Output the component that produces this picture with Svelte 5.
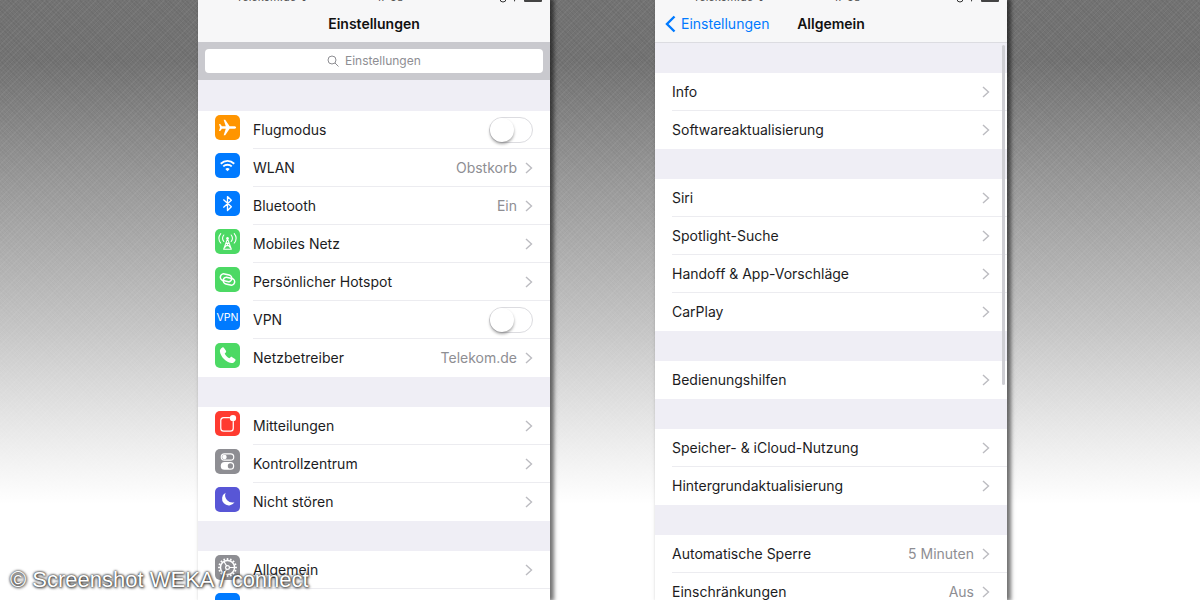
<script>
  const settings = [
    [
      { label: 'Flugmodus', icon: 'plane', color: '#ff9500', toggle: true },
      { label: 'WLAN', icon: 'wifi', color: '#007aff', value: 'Obstkorb' },
      { label: 'Bluetooth', icon: 'bluetooth', color: '#007aff', value: 'Ein' },
      { label: 'Mobiles Netz', icon: 'antenna', color: '#4cd964' },
      { label: 'Persönlicher Hotspot', icon: 'hotspot', color: '#4cd964' },
      { label: 'VPN', icon: 'vpn', color: '#007aff', toggle: true },
      { label: 'Netzbetreiber', icon: 'phone', color: '#4cd964', value: 'Telekom.de' }
    ],
    [
      { label: 'Mitteilungen', icon: 'notify', color: '#ff3b30' },
      { label: 'Kontrollzentrum', icon: 'control', color: '#8e8e93' },
      { label: 'Nicht stören', icon: 'moon', color: '#5856d6' }
    ],
    [
      { label: 'Allgemein', icon: 'gear', color: '#8e8e93' },
      { label: '', icon: 'display', color: '#007aff' }
    ]
  ];

  const general = [
    [{ label: 'Info' }, { label: 'Softwareaktualisierung' }],
    [
      { label: 'Siri' },
      { label: 'Spotlight-Suche' },
      { label: 'Handoff & App-Vorschläge' },
      { label: 'CarPlay' }
    ],
    [{ label: 'Bedienungshilfen' }],
    [{ label: 'Speicher- & iCloud-Nutzung' }, { label: 'Hintergrundaktualisierung' }],
    [
      { label: 'Automatische Sperre', value: '5 Minuten' },
      { label: 'Einschränkungen', value: 'Aus' }
    ]
  ];

  const teeth = Array.from({ length: 16 }, (_, i) => i * 22.5);
</script>

{#snippet statusBar()}
  <div class="status">
    <span>Telekom.de ᯤ</span>
    <span>17:58</span>
    <span class="power">
      <svg width="46" height="12" viewBox="0 0 46 12" aria-hidden="true">
        <circle cx="5" cy="8" r="3" fill="none" stroke="#333" />
        <path d="M16 11l6-9-9 4h3z" fill="#333" />
        <rect x="26" y="2" width="18" height="9" rx="1" fill="#444" />
      </svg>
    </span>
  </div>
{/snippet}

{#snippet glyph(name)}
  <svg viewBox="0 0 26 26" fill="none" stroke="#fff" stroke-linecap="round" stroke-linejoin="round" aria-hidden="true">
    {#if name === 'plane'}
      <path d="M22 13c0-.9-1.200-1.400-2.600-1.400h-4.200L10.600 5H9l2.200 6.600H7.200L5.400 9.400H4.200L5.200 13l-1 3.600h1.200l1.800-2.200h4L9 21h1.600l4.600-6.600h4.200c1.400 0 2.600-.5 2.600-1.400z" fill="#fff" stroke="none" />
    {:else if name === 'wifi'}
      <path d="M6 11.200c4-3.900 10-3.900 14 0M8.600 14c2.500-2.400 6.300-2.400 8.800 0" stroke-width="1.900" stroke-linecap="butt" />
      <path d="M13 19l-2.300-2.400c1.300-1.200 3.300-1.200 4.600 0z" fill="#fff" stroke="none" />
    {:else if name === 'bluetooth'}
      <path d="M9 9.200l8 7.200-4 3.800V5.800l4 3.800-8 7.200" stroke-width="1.400" />
    {:else if name === 'antenna'}
      <path d="M13 10l-4 11M13 10l4 11M11.500 14.500h3M10.500 17.500h5M11.500 14.500l5 5.500M14.500 14.500l-5 5.500M9 21h8" stroke-width="1.100" />
      <circle cx="13" cy="9.500" r="1.300" fill="#fff" stroke="none" />
      <path d="M9.200 6.200c-1.500 1.900-1.500 4.900 0 6.800M16.800 6.200c1.500 1.900 1.500 4.900 0 6.800M6 4.800c-2.500 3-2.500 6.800 0 9.800M20 4.800c2.500 3 2.500 6.800 0 9.800" stroke-width="1.100" />
    {:else if name === 'hotspot'}
      <g stroke-width="1.600">
        <rect x="5.500" y="7.700" width="12" height="7" rx="3.500" transform="rotate(14 11.500 11.200)" />
        <rect x="8.500" y="11.300" width="12" height="7" rx="3.500" transform="rotate(14 14.500 14.800)" />
      </g>
    {:else if name === 'vpn'}
      <text x="13" y="17" text-anchor="middle" class="vpn">VPN</text>
    {:else if name === 'phone'}
      <path d="M7.600 4.800c.7-.5 1.300-.4 1.800.3l2 3c.4.700.3 1.200-.2 1.700l-1.100 1.100c.9 2 2.700 3.900 4.900 5l1.200-1.100c.5-.5 1-.5 1.700-.1l2.900 2c.7.5.8 1.100.3 1.800-1.100 1.800-2.500 2.700-4.300 2.300C11 19.600 5.900 14.300 5.100 8.800c-.2-1.600.9-3 2.500-4z" fill="#fff" stroke="none" />
    {:else if name === 'notify'}
      <path d="M15 7H9a3 3 0 0 0-3 3v8a3 3 0 0 0 3 3h7a3 3 0 0 0 3-3v-7" stroke-width="1.300" />
      <circle cx="18.700" cy="7.400" r="3.300" fill="#fff" stroke="none" />
    {:else if name === 'control'}
      <rect x="6.500" y="5" width="13" height="6.600" rx="3.300" stroke-width="1.200" />
      <circle cx="9.800" cy="8.300" r="2.400" fill="#fff" stroke="none" />
      <rect x="6" y="13.600" width="14" height="8" rx="4" fill="#fff" stroke="none" />
      <circle cx="16" cy="17.600" r="2.700" fill="#8e8e93" stroke="none" />
    {:else if name === 'moon'}
      <path d="M11 6a7 7 0 1 0 9.300 9.800A7.600 7.600 0 0 1 11 6z" fill="#fff" stroke="none" />
    {:else if name === 'gear'}
      {#each teeth as angle}
        <path d="M13 3.200v2" stroke-width="1.700" stroke-linecap="butt" transform="rotate({angle} 13 13)" />
      {/each}
      <circle cx="13" cy="13" r="7.300" stroke-width="1.500" />
      <circle cx="13" cy="13" r="2" stroke-width="1.200" />
      <path d="M15 13h5M12 11.300L9.500 7M12 14.700L9.500 19" stroke-width="1.200" />
    {/if}
  </svg>
{/snippet}

{#snippet rowBody(item)}
  {#if item.icon}
    <span class="icon" style="background: {item.color}">{@render glyph(item.icon)}</span>
  {/if}
  <span class="cell">
    <span class="label">{item.label}</span>
    {#if item.value}<span class="value">{item.value}</span>{/if}
    {#if item.toggle}
      <input class="switch" type="checkbox" />
    {:else}
      <svg class="chevron" viewBox="0 0 8 12" aria-hidden="true"><path d="M1 1l5.500 5L1 11" /></svg>
    {/if}
  </span>
{/snippet}

{#snippet groups(list)}
  {#each list as group}
    <ul class="group">
      {#each group as item}
        <li>
          {#if item.toggle}
            <label class="row">{@render rowBody(item)}</label>
          {:else}
            <button class="row" type="button">{@render rowBody(item)}</button>
          {/if}
        </li>
      {/each}
    </ul>
  {/each}
{/snippet}

<main class="stage">
  <section class="phone first">
    <header>
      {@render statusBar()}
      <div class="nav"><h1>Einstellungen</h1></div>
    </header>
    <div class="searchbar">
      <label class="search">
        <svg viewBox="0 0 12 12" aria-hidden="true"><circle cx="5" cy="5" r="4" /><path d="M8 8l3.500 3.500" /></svg>
        <input type="text" placeholder="Einstellungen" aria-label="Einstellungen" />
      </label>
    </div>
    <div class="lists">{@render groups(settings)}</div>
  </section>

  <section class="phone second">
    <header>
      {@render statusBar()}
      <div class="nav">
        <a class="back" href="#einstellungen">
          <svg viewBox="0 0 11 18" aria-hidden="true"><path d="M9.500 1.500L2 9l7.500 7.500" /></svg>
          Einstellungen
        </a>
        <h1>Allgemein</h1>
      </div>
    </header>
    <div class="lists ruled">{@render groups(general)}</div>
    <span class="scroll"></span>
  </section>

  <p class="credit">© Screenshot WEKA / connect</p>
</main>

<style>
  :global(body) {
    margin: 0;
    overflow: hidden;
  }

  .stage {
    position: relative;
    display: grid;
    grid-template-columns: 198fr 352fr 105fr 352fr 193fr;
    height: 100vh;
    overflow: hidden;
    font-family: Inter, 'Liberation Sans', sans-serif;
    color: #1c1c1e;
    background:
      linear-gradient(transparent 10%, #fff 84%),
      repeating-linear-gradient(-45deg, rgba(255, 255, 255, 0.05) 0 1px, transparent 1px 4px),
      repeating-linear-gradient(45deg, rgba(0, 0, 0, 0.05) 0 1px, transparent 1px 3px),
      linear-gradient(#737373 0%, #737373 30%, #6e6e6e 55%, #8c8c8c 100%);
  }

  .phone {
    position: relative;
    min-width: 0;
    min-height: 0;
    overflow: hidden;
    background: #efeef5;
    box-shadow: 3px 0 4px 1px rgba(0, 0, 0, 0.55);
  }

  .first { grid-column: 2; }
  .second { grid-column: 4; }

  header {
    height: 42px;
    overflow: hidden;
    background: #f7f7f8;
  }

  .status {
    display: grid;
    grid-template-columns: 1fr auto 1fr;
    height: 12px;
    margin-top: -9px;
    padding: 0 6px 0 38px;
    font-size: 11px;
    line-height: 12px;
    color: #555;
  }

  .power { text-align: right; }

  .nav {
    display: grid;
    grid-template-columns: 1fr auto 1fr;
    align-items: center;
    height: 42px;
    padding: 0 10px;
  }

  h1 {
    grid-column: 2;
    margin: 0;
    font-size: 14px;
    line-height: 20px;
    font-weight: 600;
    color: #111;
  }

  .back {
    display: flex;
    align-items: center;
    gap: 5px;
    font-size: 14px;
    line-height: 20px;
    color: #007aff;
    text-decoration: none;
  }

  .back svg {
    width: 11px;
    height: 18px;
    fill: none;
    stroke: #007aff;
    stroke-width: 2.4;
  }

  .searchbar {
    padding: 7px;
    background: #c9c9ce;
  }

  .search {
    display: flex;
    align-items: center;
    justify-content: center;
    gap: 6px;
    height: 24px;
    border-radius: 4px;
    background: #fff;
  }

  .search svg {
    width: 12px;
    height: 12px;
    fill: none;
    stroke: #8e8e93;
  }

  .search input {
    width: 76px;
    padding: 0;
    border: 0;
    outline: 0;
    background: none;
    font: 12px/16px Inter, 'Liberation Sans', sans-serif;
  }

  .search input::placeholder { color: #8e8e93; }

  .lists { border-top: 1px solid transparent; }
  .ruled { border-color: #dcdce1; }

  .group {
    margin: 30px 0 0;
    padding: 0;
    list-style: none;
    background: #fff;
  }

  .row {
    box-sizing: border-box;
    display: flex;
    width: 100%;
    height: 38px;
    padding: 0 0 0 17px;
    border: 0;
    background: none;
    font: 14px/20px Inter, 'Liberation Sans', sans-serif;
    color: inherit;
    text-align: left;
  }

  .icon {
    flex: none;
    width: 25px;
    height: 25px;
    margin: 4px 13px 0 0;
    border-radius: 5px;
  }

  .icon svg {
    display: block;
    width: 25px;
    height: 25px;
  }

  .vpn {
    font: 11px Inter, 'Liberation Sans', sans-serif;
    fill: #fff;
    stroke: none;
  }

  .cell {
    display: flex;
    flex: 1;
    align-items: center;
    min-width: 0;
    padding-right: 17px;
    border-bottom: 1px solid #ececf0;
  }

  li:last-child .cell { border-color: transparent; }

  .label {
    flex: 1;
    white-space: nowrap;
  }

  .value { color: #8e8e93; }

  .chevron {
    width: 8px;
    height: 12px;
    margin-left: 8px;
    fill: none;
    stroke: #bcbcc1;
    stroke-width: 1.4;
  }

  .switch {
    box-sizing: border-box;
    appearance: none;
    width: 44px;
    height: 26px;
    margin: 0;
    border: 1px solid #dcdce0;
    border-radius: 13px;
    background: #fff;
  }

  .switch::before {
    content: '';
    display: block;
    width: 24px;
    height: 24px;
    border-radius: 50%;
    background: #fff;
    box-shadow: 0 2px 3px rgba(0, 0, 0, 0.35);
  }

  .switch:checked { background: #4cd964; }
  .switch:checked::before { margin-left: auto; }

  .scroll {
    position: absolute;
    top: 45px;
    right: 2px;
    width: 3px;
    height: 340px;
    border-radius: 2px;
    background: #cfcfd4;
  }

  .credit {
    position: absolute;
    left: 10px;
    bottom: 8px;
    margin: 0;
    font: 22px/24px 'Liberation Sans', Arial, sans-serif;
    color: #fff;
    white-space: nowrap;
    text-shadow: 0 0 2px #222, 0 0 3px #444, 1px 1px 3px #666;
  }
</style>
